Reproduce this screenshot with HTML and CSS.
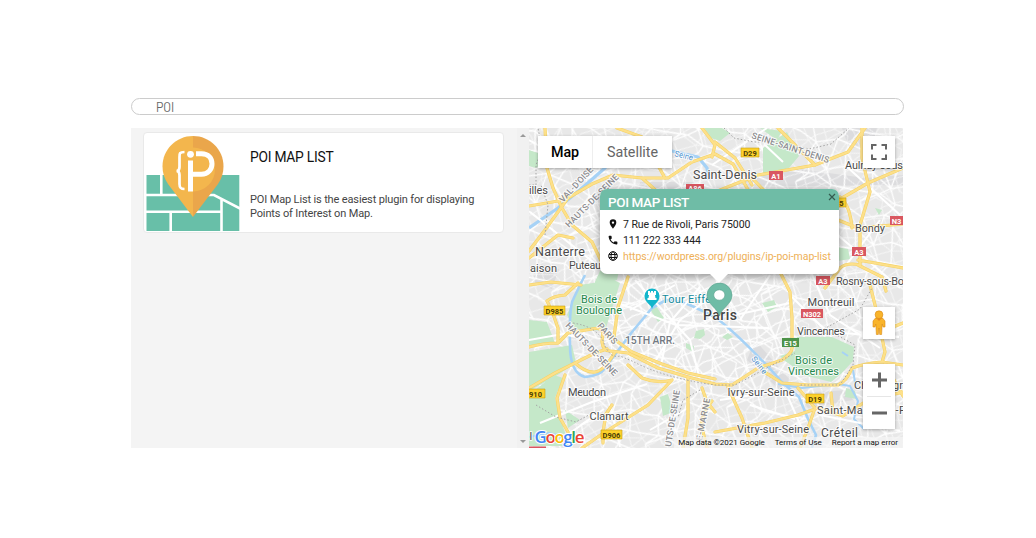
FILE: index.html
```html
<!DOCTYPE html>
<html lang="en">
<head>
<meta charset="utf-8">
<title>POI Map List</title>
<link rel="stylesheet" href="styles.css">
</head>
<body>
<main class="widget">
  <div class="search">POI</div>
  <div class="panes">
    <section class="list">
      <article class="card">
        <svg class="logo" width="94" height="96" viewBox="146 135.500 94 96">
          <path fill="#68bfa8" d="M146.500 174.500h92.800v56h-92.800z"/>
          <path fill="none" stroke="#fff" stroke-width="2.600" d="M161.300 173v21M146 194.500h68l27 14M146 211.300h76M170.700 211v20M221.500 199v32"/>
          <path fill="#f3b64d" d="M193 135.500c-17 0-30.500 13.500-30.500 30.500 0 6.500 2 12.500 5.500 17.500l25 33z"/>
          <path fill="#eaa64b" d="M193 135.500c17 0 30.500 13.500 30.500 30.500 0 6.500-2 12.500-5.500 17.500l-25 33z"/>
          <path fill="#f3b64d" d="M193 147a22 22 0 0 1 0 44z"/>
          <g fill="none" stroke="#fff">
            <path stroke-width="2.700" d="M184.500 151.500c-5 0-5 1.500-5 5v10c0 2.500-1 4-3 4 2 0 3 1.500 3 4v9c0 3.500 1 5 5 5"/>
            <path stroke-width="5" d="M190.500 191v-31M196 153.300h5.500c7 0 10.500 4.500 10.500 10s-4 10.500-10.500 10.500h-10"/>
          </g>
          <circle cx="190.500" cy="153.800" r="3.400" fill="#fff"/>
        </svg>
        <div class="card-text">
          <h2>POI MAP LIST</h2>
          <p>POI Map List is the easiest plugin for displaying<br>Points of Interest on Map.</p>
        </div>
      </article>
    </section>
    <div class="scroll"><i class="up"></i><i class="down"></i></div>
    <section class="map">
      <svg class="tiles" width="374" height="320" viewBox="529 128 374 320">
        <defs>
          <pattern id="st" width="67" height="59" patternUnits="userSpaceOnUse" patternTransform="rotate(17)">
            <path class="street" d="M0 9l18 6 20-9 29 3M0 31l14-3 22 10 17-8 14 1M0 50l27-4 18 6 22-2M10 0l8 15-4 13 6 19-10 12M38 6l-2 32 9 14-2 7M38 6l5-6M53 0l-4 15 4 15 5 20-5 9M18 15l18 23-9 8M49 15l18 16M27 46l-17 13"/>
          </pattern>
          <pattern id="st2" width="41" height="37" patternUnits="userSpaceOnUse" patternTransform="rotate(-28)">
            <path class="street thin" d="M0 8l13 3 12-6 16 3M0 21l20 4 21-4M0 32l17-2 24 2M8 0l5 11-6 26M8 37V31M25 5l-5 20 9 12M29 0l-4 5M36 0l-3 22 3 15M13 11l20 11"/>
          </pattern>
        </defs>
        <path fill="#e8e8e8" d="M529 128h374v320H529z"/>
        <g fill="#dcdcde"><path d="M727 185l65-17 73 10 38-3v10l-105 1zM755 340l35 40-8 12-35-32zM842 128h35l-5 20h-23zM640 182h55l-7 14h-50zM798 393l50-3 5 10-45 8zM539 264l20 5-7 20-20-7z"/></g>
        <path fill="url(#st)" d="M529 128h374v320H529z"/>
        <path fill="url(#st2)" d="M590 190l155 85 47 20-3 50-60 40-125-35-30-80z"/>
        <path fill="url(#st2)" opacity=".6" d="M529 128h374v320H529z"/>
        <g class="park">
          <path d="M579 285l35-5 6 3-15 48-30-2-8-14zM529 320l18 2 8 21-26 3zM529 352l43-7 4 18-20 13-27 15zM529 395l25-20 9 3-8 20 5 18 9 30h-40zM763 148l24-16 12 24-10 12-26 8zM797 337l35 0 22 10-1 14-12 13-10 8-24-6-22-15-5-5 15-5zM529 150l12 4 3 9-8 5-7-2zM600 271l20-5-3 14-23 4zM760 128l22 3-5 9zM660 397l8-3 5 18-10 4zM836 247l12 2 2 10-12 2zM762 303l12-3 3 7-9 5zM722 337l6-4 5 4-6 3zM696 331l8-2 1 6-5 4-6-1zM686 343l8 3-1 6-7-4zM565 410l15 10-12 8zM846 388l9 3 2 8-12-2zM650 309l6-3 8 12-6 4zM875 208l7 2-3 5zM704 128l18 0 8 5-10 8-9-3z"/>
        </g>
        <g class="water">
          <path class="seine" d="M529 228l29-20 24-20 23-20 18-20 25-6 24 9 26 6 9 11 2 12"/>
          <path class="seine mid-seine" d="M585 275q-8 16-13 27-3 14-2 43 0 28 15 32 15-1 20-9l27-36 20-24 14-8q14 0 26 6l17 8 10 6q25 20 63 62l17 15 9 22 8 16-4 13"/>
          <path class="marne" d="M778 384l24 4 36-4 12 2 8 15-4 18 10 10M529 437l20-4 12 3"/>
          <path class="marne" d="M842 352l6 4M853 370l3 18"/>
        </g>
        <g class="strong">
          <path d="M529 340l34-6 18 4M540 423l52-21 55-18M560 440l44-31M630 310l45-25M635 280l55 60 10 40M660 370l10-48 30-35M720 290l-40 30-27 45M610 300l66 25 93 3M740 320l30-45M735 315l55-12M792 297l35 35 72 5M810 270l20 45 50 33M720 400l65-10 25 57M765 145l18 17M712 165l55-37M845 165l55 50M826 225l74 63M880 220l-45 60M529 140l45 25M530 212l72 57M610 405l10 42M820 415l80 16M750 405l45 14M650 430l38-22"/>
        </g>
        <g id="roads">
          <g class="road-edge"><use href="#main"/></g>
          <g class="road">
            <g id="main">
              <path d="M529 251l16-21 23-32 24-14 21-9 29 3 26 0 24-16 23-8 18 10 17 29M545 128l2 40 6 20 9 20 10 17 20 17 12 25M529 258l29-23 15 3M529 206l29-5 8-5M617 128l25 9 23 41M702 128l13 17-3 12M642 178l20 18"/>
              <path d="M578 283l-13 12q-12 1-18 6l5 10 6 17v15q-15 0-29 4M558 343l10-10 30-5 20 14 14 10 30 12 26 9 27 6M603 332l-1 10q1 9 8 9l18 2 30 15 30 9 27 7 17 1 26-17 24-8q12-8 10-15V318l-2-26-10-20"/>
              <path d="M529 388l26-15 20-10 20-10 12-4M565 375l-8 23 3 20 8 14M628 365l14 13q15 6 30 2l-24 25-43 27-23 16M603 443v-11l3-18 6-9M575 363q11 10 20 9t20-20M614 337l4-30 10-30M688 377v41l-5 30M702 388l5 14 8 10M728 387l14 31 10 30M712 401q-12 15-10 27l5 20"/>
              <path d="M758 368l24 15 26 2h30q9-4 14-17 14-5 30-6l21 3M715 432l50-9 33-8 20-7 25 8 25-16 35-8M798 388l17 20-7 20-8 20M870 285l5 20 10 47-3 10M903 323l-33 13M831 393l2 20M884 362l19 34"/>
              <path d="M715 192l43-17 57-10 33-13 17-24M862 128v30l8 34-10 33v40q-13-3-20 3l-15 20M830 205l38-22 35-15M838 220l20 8 45-4M778 128l37 37M715 142l20 16 17 27M858 265l24 12 4 14M752 178l25 26M858 260l45 8M840 197q10 8 12 31M529 285l22-3 30 3"/>
            </g>
          </g>
        </g>
        <path class="boundary" d="M529 185h7v-20l6-16-4-21M545 235l3-30-7-20M536 405l20 12 20 5 20-11M573 323q25 4 31 20t16 13l12 5q32 17 83 24h20l60-32M800 335l33-2 22 12-2 20-13 20-40 0M700 390l-17 10-5 18M724 128l10 10 20 4 25 0 30 7 22-5 18-16M824 329l36-20 12-21"/>
        <g class="labels">
          <text class="region" transform="translate(563 203) rotate(-47)" textLength="45">VAL-D'OISE</text>
          <text class="region" transform="translate(569 228) rotate(-45)" textLength="71">HAUTS-DE-SEINE</text>
          <text class="region" transform="translate(751 138) rotate(18)" textLength="81">SEINE-SAINT-DENIS</text>
          <text class="region" transform="translate(565 326) rotate(46)" textLength="70">HAUTS-DE-SEINE</text>
          <text class="region" transform="translate(597 326) rotate(49)" textLength="25">PARIS</text>
          <text class="region" transform="translate(671 447) rotate(-81)" textLength="57">UTS-DE-SEINE</text>
          <text class="region" transform="translate(702 441) rotate(-79)" textLength="43">E-MARNE</text>
          <text class="city" x="529" y="194" textLength="19">illes</text>
          <text class="town-l" x="535" y="256" textLength="50">Nanterre</text>
          <text class="city" x="530" y="272" textLength="27">aison</text>
          <text class="city" x="569" y="269" textLength="32">Puteau</text>
          <text class="town-l" x="693" y="178.500" textLength="64">Saint-Denis</text>
          <text class="city" x="845" y="169" textLength="58">Aulnay-sous</text>
          <text class="city" x="855" y="231.500" textLength="30">Bondy</text>
          <text class="city" x="836" y="285" textLength="68">Rosny-sous-Bo</text>
          <text class="city" x="807.500" y="306" textLength="47">Montreuil</text>
          <text class="city" x="797" y="334.500" textLength="48">Vincennes</text>
          <text class="city" x="568" y="396" textLength="38">Meudon</text>
          <text class="city" x="589.500" y="419.500" textLength="39">Clamart</text>
          <text class="city" x="727.500" y="395.500" textLength="67">Ivry-sur-Seine</text>
          <text class="city" x="737" y="433" textLength="72">Vitry-sur-Seine</text>
          <text class="city mid" x="821" y="436.500" textLength="37">Créteil</text>
          <text class="city" x="817" y="414" textLength="88">Saint-Maur-des-F</text>
          <text class="city" x="854" y="389" textLength="49">Champigr</text>
          <text class="city" x="529.500" y="440">l</text>
          <text class="capital" x="703" y="320" textLength="34">Paris</text>
          <text class="arr" x="625" y="343.500" textLength="50">15TH ARR.</text>
          <text class="green" x="581" y="303" textLength="36">Bois de</text>
          <text class="green" x="576" y="314" textLength="46">Boulogne</text>
          <text class="green" x="795" y="363.500" textLength="37">Bois de</text>
          <text class="green" x="788" y="375" textLength="51">Vincennes</text>
          <text class="river" transform="translate(674 156) rotate(14)" textLength="19">Seine</text>
          <text class="river" transform="translate(751 359) rotate(52)" textLength="20">Seine</text>
          <text class="poi" x="662" y="302.500" textLength="52">Tour Eiffel</text>
        </g>
        <g class="shields">
          <g class="yellow">
            <path d="M741 148h18v9h-18zM544 306h21v9h-21zM525 389h20v9h-20zM601 430h21v9h-21zM806 394h18v9h-18zM826 198h20v9h-20z"/>
            <text x="750" y="155.500">D29</text><text x="554.500" y="313.500">D985</text><text x="535.500" y="396.500">910</text><text x="611.500" y="437.500">D906</text><text x="815" y="401.500">D19</text><text x="841.500" y="205.500">5</text>
          </g>
          <g class="red">
            <path d="M769 171h14v9h-14zM686 184h18v9h-18zM852 247h14v9h-14zM816 276h14v9h-14zM890 216h14v9h-14zM801 309h22v9h-22zM529 446.500h17v2h-17z"/>
            <text x="776" y="178.500">A1</text><text x="695" y="191">A86</text><text x="859" y="254.500">A3</text><text x="823" y="283.500">A3</text><text x="896.500" y="223.500">N3</text><text x="812" y="316.500">N302</text>
          </g>
          <path fill="#4d9349" d="M782 338h17v9h-17z"/><text class="white" x="790.500" y="345.500">E15</text>
        </g>
        <path fill="#12b5cb" d="M652 309c-1-5-7.500-6-7.500-13a7.500 7.500 0 0 1 15 0c0 7-6.500 8-7.500 13z"/>
        <path fill="#fff" d="M648 291h2v1.500h1V291h2v1.500h1V291h2v4h-1l.5 3h1v2h-9v-2h1l.5-3h-1z"/>
        <path fill="#6fbca6" stroke="#579f8b" stroke-width=".6" d="M719.500 316c-2-8-12.500-12-12.500-20.500a12.500 12.500 0 0 1 25 0c0 8.500-10.500 12.500-12.500 20.500z"/>
        <ellipse cx="719.300" cy="295" rx="5.600" ry="5.200" fill="#fff" stroke="#579f8b" stroke-width=".6"/>
        <text class="google" x="534.500" y="442.500" textLength="50"><tspan fill="#4285f4">G</tspan><tspan fill="#ea4335">o</tspan><tspan fill="#fbbc05">o</tspan><tspan fill="#4285f4">g</tspan><tspan fill="#34a853">l</tspan><tspan fill="#ea4335">e</tspan></text>
      </svg>

      <div class="types"><b>Map</b><span>Satellite</span></div>
      <div class="ctl full"><svg width="16" height="16" viewBox="0 0 16 16"><path fill="none" stroke="#666" stroke-width="2" d="M1 5.500V1h4.500M10.500 1H15v4.500M15 10.500V15h-4.500M5.500 15H1v-4.500"/></svg></div>
      <div class="ctl man"><svg width="16" height="26" viewBox="0 0 16 26"><path fill="#f9b42b" stroke="#d88a18" stroke-width=".6" d="M4.500 8h7l2.500 3v6h-2l-.8-3-.6 10.500H8.700L8 18l-.7 6.500H5.400L4.800 14 4 17H2v-6z"/><path fill="#e88922" d="M5 8h6l-3 3z"/><circle cx="8" cy="4.700" r="3.900" fill="#f9b42b" stroke="#d88a18" stroke-width=".6"/></svg></div>
      <div class="ctl zoomer"><svg width="32" height="65" viewBox="0 0 32 65"><path fill="none" stroke="#666" stroke-width="3" d="M9 16h15M16.500 8.500v15M9 49h15"/><path stroke="#e6e6e6" d="M4 32.500h24"/></svg></div>

      <div class="info">
        <header><h3>POI MAP LIST</h3><svg width="8" height="8" viewBox="0 0 8 8"><path stroke="#335b50" stroke-width="1.200" d="M1 1l6 6M7 1L1 7"/></svg></header>
        <ul>
          <li><svg width="10" height="10" viewBox="0 0 10 10"><path fill="#111" fill-rule="evenodd" d="M5 .3a3.300 3.300 0 0 1 3.300 3.300C8.300 6 5 9.700 5 9.700S1.700 6 1.700 3.600A3.300 3.300 0 0 1 5 .3zM5 2.400a1.200 1.200 0 1 0 0 2.400 1.200 1.200 0 0 0 0-2.400z"/></svg><span class="addr">7 Rue de Rivoli, Paris 75000</span></li>
          <li><svg width="10" height="10" viewBox="0 0 24 24"><path fill="#111" d="M6 10.500c1.600 3.200 4 5.600 7.200 7.200l2.400-2.400c.4-.3.800-.4 1.200-.3 1.300.4 2.700.7 4.200.7.700 0 1.500.6 1.500 1.300V21c0 .8-.7 1.500-1.500 1.500C10.500 22.500 1.500 13.500 1.500 3c0-.8.700-1.500 1.500-1.500h4.200c.7 0 1.300.6 1.300 1.500 0 1.500.3 2.900.7 4.200.1.400 0 .9-.3 1.200z"/></svg><span class="tel">111 222 333 444</span></li>
          <li><svg width="10" height="10" viewBox="0 0 10 10"><g fill="none" stroke="#111" stroke-width="1"><circle cx="5" cy="5" r="4.300"/><ellipse cx="5" cy="5" rx="2" ry="4.300"/><path d="M1 3.500h8M1 6.500h8"/></g></svg><span class="url">https://wordpress.org/plugins/ip-poi-map-list</span></li>
        </ul>
      </div>
      <div class="legal"><span>Map data ©2021 Google</span><span>Terms of Use</span><span>Report a map error</span></div>
    </section>
  </div>
</main>
</body>
</html>
```
FILE: styles.css
```css
* { box-sizing: border-box; }
body { margin: 0; background: #fff; font-family: Roboto, "Liberation Sans", sans-serif; }
.widget { width: 772px; margin: 98px 0 0 131px; }
.search { width: 773px; height: 17px; border: 1px solid #ccc; border-radius: 9px; padding-left: 24px; font: 12.500px/16px Barlow, Roboto, sans-serif; color: #666; letter-spacing: -.1px; }
.panes { display: flex; margin-top: 13px; height: 320px; }
.list { width: 386px; background: #f4f4f4; padding: 4px 0 0 12px; }
.card { display: flex; width: 361px; height: 101px; padding: 3px 2px; border: 1px solid #e9e9e9; border-radius: 4px; background: #fff; }
.logo { flex: none; }
.card-text { padding: 13px 0 0 10px; white-space: nowrap; }
.card h2 { margin: 0; font-size: 13.800px; line-height: 16px; font-weight: 400; color: #111; letter-spacing: -.24px; }
.card p { margin: 28px 0 0; font-size: 11px; line-height: 13.500px; color: #444; letter-spacing: -.14px; }
.scroll { width: 12px; background: #f1f1f1; display: flex; flex-direction: column; justify-content: space-between; align-items: center; padding: 6px 0 5px; }
.up, .down { border: 3px solid transparent; }
.up { border-top: 0; border-bottom-color: #999; }
.down { border-bottom: 0; border-top-color: #999; }
.map { position: relative; width: 374px; height: 320px; overflow: hidden; }
.tiles { display: block; }

.street { fill: none; stroke: #fff; stroke-width: 1.300; }
.thin { stroke-width: 1; }
.strong { fill: none; stroke: #fff; stroke-width: 2; }
.park { fill: #c5e8c9; }
.water { fill: none; stroke: #a6d2f6; stroke-linejoin: round; }
.seine { stroke-width: 3.200; }
.mid-seine { stroke-width: 2.600; }
.marne { stroke-width: 2; }
.road, .road-edge { fill: none; stroke-linejoin: round; stroke-linecap: round; }
.road { stroke: #fde08a; stroke-width: 2.200; }
.road-edge { stroke: #f5d264; stroke-width: 3.200; }
.boundary { fill: none; stroke: #a5a5a5; stroke-width: 1; stroke-dasharray: 1.500 2; }
.labels text { paint-order: stroke; stroke: rgba(255,255,255,.8); stroke-width: 2px; stroke-linejoin: round; }
.region { font-size: 8.800px; font-weight: 500; fill: #8c8c90; }
.city { font-size: 11px; fill: #4a4a4a; }
.mid { font-size: 12px; }
.town-l { font-size: 12.500px; fill: #4a4a4a; }
.capital { font-size: 14px; font-weight: 500; fill: #444; }
.arr { font-size: 10.500px; font-weight: 500; fill: #737982; }
.green { font-size: 11px; fill: #24884c; }
.river { font-size: 8px; fill: #4c8fce; }
.poi { font-size: 11px; fill: #168b9c; }
.shields text { font-size: 7.500px; font-weight: 700; text-anchor: middle; }
.yellow path { fill: #fdd12b; stroke: #c7a015; stroke-width: .6; }
.yellow text { fill: #4b3d05; }
.red path { fill: #d95760; }
.red text, .shields .white { fill: #fff; }
.google { font: 600 17px "Open Sans", sans-serif; paint-order: stroke; stroke: #fff; stroke-width: 2px; }

.types, .ctl { position: absolute; background: #fff; box-shadow: 0 1px 3px rgba(0,0,0,.3); }
.types { left: 9px; top: 8px; height: 32px; display: flex; font-size: 14.300px; line-height: 33px; color: #666; }
.types b { width: 54px; text-align: center; font-weight: 500; color: #000; }
.types span { width: 80px; text-align: center; border-left: 1px solid #eee; }
.ctl { right: 8px; width: 32px; height: 32px; display: flex; align-items: center; justify-content: center; }
.full { top: 8px; }
.man { top: 179px; }
.zoomer { top: 236px; height: 65px; }

.info { position: absolute; left: 71px; top: 61px; width: 239px; height: 85px; border-radius: 7px; background: #fff; box-shadow: 0 2px 6px 1px rgba(0,0,0,.33); }
.info::after { content: ""; position: absolute; left: 110px; top: 85px; border: 9px solid transparent; border-top-color: #fff; border-bottom: 0; }
.info header { display: flex; justify-content: space-between; height: 21px; border-radius: 7px 7px 0 0; padding: 4px 3px 0 8px; background: #6fbca6; }
.info h3 { margin: 0; font-size: 13.500px; line-height: 18px; font-weight: 500; color: #fff; letter-spacing: -.38px; }
.info ul { margin: 0; padding: 6px 0 0 8px; list-style: none; }
.info li { display: flex; align-items: center; gap: 5px; height: 16px; font-size: 10.500px; color: #222; white-space: nowrap; letter-spacing: -.05px; }
.info .url { color: #eeb057; }
.legal { position: absolute; right: 0; bottom: 0; height: 11px; display: flex; gap: 10px; padding: 0 5px 0 4px; background: rgba(245,245,245,.7); font-size: 8px; line-height: 12px; color: #111; white-space: nowrap; letter-spacing: -.03px; }
```
